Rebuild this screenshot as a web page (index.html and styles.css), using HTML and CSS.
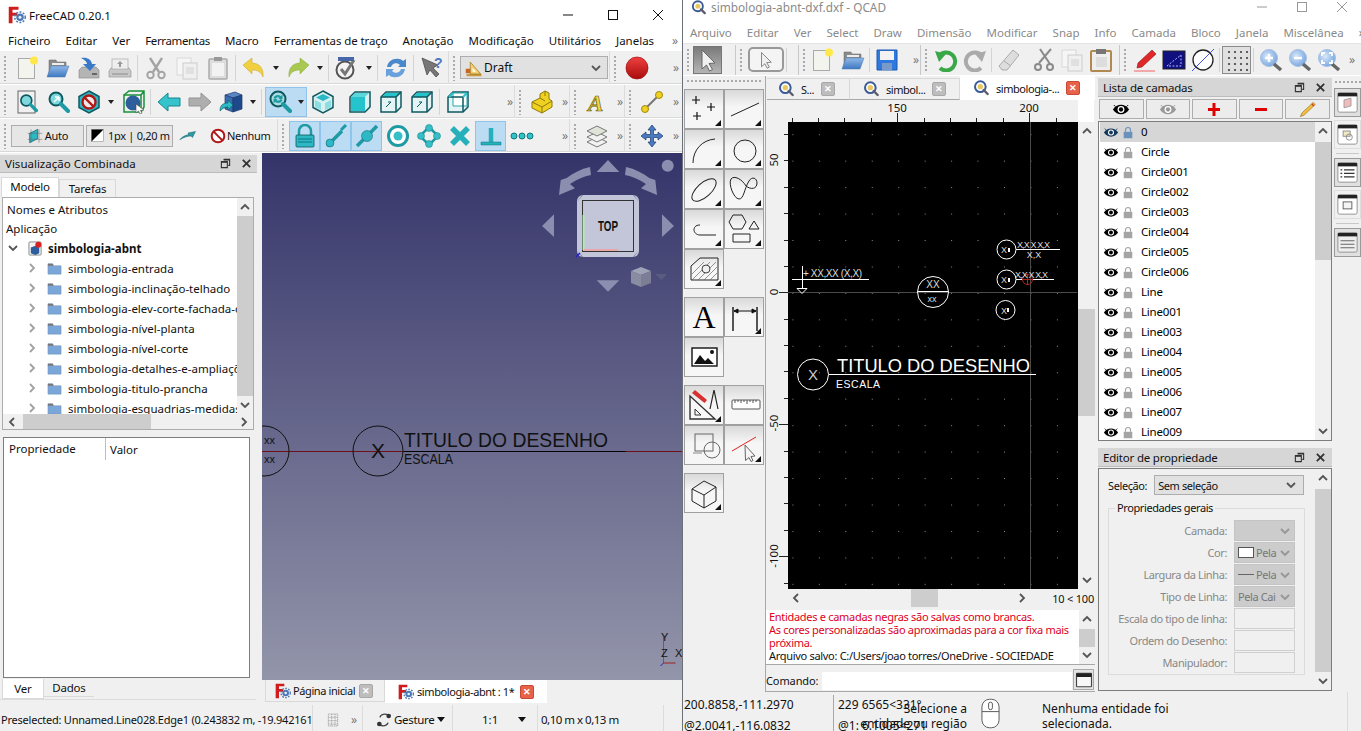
FILE: index.html
```html
<!DOCTYPE html>
<html lang="pt">
<head>
    <meta charset="UTF-8">
    <title>FreeCAD e QCAD</title>
    <link rel="stylesheet" href="styles.css">
</head>
<body>
<svg class="defs" xmlns="http://www.w3.org/2000/svg">
    <defs>
        <linearGradient id="g-red" x1="0" y1="0" x2="0" y2="1"><stop offset="0" stop-color="#f04040"/><stop offset="1" stop-color="#a80c0c"/></linearGradient>
        <linearGradient id="g-blue" x1="0" y1="0" x2="0" y2="1"><stop offset="0" stop-color="#8fb8e8"/><stop offset="1" stop-color="#3f78c0"/></linearGradient>
        <radialGradient id="g-sky" cx=".4" cy=".4" r=".7"><stop offset="0" stop-color="#d8e8fa"/><stop offset="1" stop-color="#6d9fdc"/></radialGradient>
    </defs>
    <symbol id="fc-logo" viewBox="0 0 24 24"><path d="M1 1h13v4H6v4h6v4H6v10H1z" fill="#d01c1c"/><circle cx="16" cy="15" r="5" fill="#4a78b4"/><circle cx="16" cy="15" r="7" fill="none" stroke="#4a78b4" stroke-width="2" stroke-dasharray="2.5 2"/><circle cx="16" cy="15" r="2" fill="#e8f0fa"/></symbol>
    <symbol id="q-logo" viewBox="0 0 24 24"><circle cx="11" cy="10" r="8" fill="#fff" stroke="#3a5a98" stroke-width="3"/><circle cx="11" cy="10" r="4" fill="#e8c860"/><path d="M16 15l6 6" stroke="#5a5a6a" stroke-width="3.5" stroke-linecap="round"/></symbol>
    <symbol id="new" viewBox="0 0 24 24"><rect x="3.5" y="2.5" width="16" height="20" fill="#f4f4ee" stroke="#aaa"/><circle cx="19" cy="4.5" r="4" fill="#ffe94a"/></symbol>
    <symbol id="open" viewBox="0 0 24 24"><path d="M3 20V4h7l1 2h9v5H8z" fill="#8a8a8a" stroke="#666" stroke-width=".5"/><path d="M6 8h12" stroke="#eee" stroke-width="2"/><path d="M1 21l4-11h18l-4 11z" fill="url(#g-blue)" stroke="#4a78b0" stroke-width=".5"/></symbol>
    <symbol id="save" viewBox="0 0 24 24"><path d="M2 14l3-3h14l3 3v8H2z" fill="#b4b4b4" stroke="#888" stroke-width=".6"/><rect x="15" y="17" width="5" height="2" fill="#666"/><path d="M4 2c6-1 10 1 11 6h4l-6 7-7-7h4C10 6 8 4 4 2z" fill="#3a78c8"/></symbol>
    <symbol id="saveas" viewBox="0 0 24 24"><path d="M1 15l2-3h18l2 3v6H1z" fill="#c8c8c8" stroke="#999" stroke-width=".7"/><rect x="4" y="3" width="16" height="10" fill="#eee" stroke="#aaa" stroke-width=".7"/><path d="M12 5l-3 3h2v3h2V8h2z" fill="#999"/><rect x="4" y="17" width="16" height="2" fill="#aaa"/></symbol>
    <symbol id="cut" viewBox="0 0 24 24"><g fill="none" stroke="#a4a4a4"><path d="M6 2l9 14M18 2L9 16" stroke-width="2.4"/><circle cx="6.500" cy="19" r="3.200" stroke-width="2"/><circle cx="17.500" cy="19" r="3.200" stroke-width="2"/></g></symbol>
    <symbol id="copy" viewBox="0 0 24 24"><rect x="2" y="2" width="14" height="17" fill="#f6f6f6" stroke="#d8d8d8"/><rect x="8" y="7" width="14" height="16" fill="#f0f0f0" stroke="#ccc"/><rect x="11" y="11" width="8" height="7" fill="#e0e0e0"/></symbol>
    <symbol id="paste" viewBox="0 0 24 24"><rect x="3" y="3" width="18" height="20" rx="1" fill="#ddd" stroke="#aaa" stroke-width="1.500"/><rect x="6" y="7" width="12" height="13" fill="#f2f2f2"/><rect x="8" y="1" width="8" height="4" fill="#999"/></symbol>
    <symbol id="undo-y" viewBox="0 0 24 24"><path d="M1 9l9-7v5c7 0 12 5 11 14-2-5-5-7-11-7v4z" fill="#f0d040" stroke="#c8a020" stroke-width=".5"/></symbol>
    <symbol id="redo-g" viewBox="0 0 24 24"><path d="M23 9l-9-7v5C7 7 2 12 3 21c2-5 5-7 11-7v4z" fill="#a8c850" stroke="#88a838" stroke-width=".5"/></symbol>
    <symbol id="check" viewBox="0 0 24 24"><circle cx="10" cy="14" r="8.500" fill="#f4f4f4" stroke="#555" stroke-width="2"/><path d="M6 13l4 5 9-14" fill="none" stroke="#777" stroke-width="3"/><rect x="3" y="1" width="16" height="4" fill="#4668a8"/></symbol>
    <symbol id="refresh" viewBox="0 0 24 24"><path d="M3 11C4 5 9 2 15 3c2 0 3 1 4 2l3-2v8h-8l2-2c-3-3-8-2-9 2z" fill="#4a88cc"/><path d="M21 13c-1 6-6 9-12 8-2 0-3-1-4-2l-3 2v-8h8l-2 2c3 3 8 2 9-2z" fill="#6aa0dc"/></symbol>
    <symbol id="draft" viewBox="0 0 24 24"><path d="M2 20h20v3H2z" fill="#c89840"/><path d="M7 4v16h14z" fill="#f0d070" stroke="#a07820"/><path d="M10 12v5h5z" fill="#fff"/><path d="M1 13h6v6H1z" fill="#c86820"/></symbol>
    <symbol id="record" viewBox="0 0 24 24"><circle cx="12" cy="12" r="11" fill="url(#g-red)" stroke="#a01010" stroke-width=".7"/></symbol>
    <symbol id="mag" viewBox="0 0 24 24"><circle cx="10" cy="9" r="6.500" fill="#7fd8dc" stroke="#0e5860" stroke-width="2"/><path d="M15 14l7 7" stroke="#1e9aa4" stroke-width="4" stroke-linecap="round"/></symbol>
    <symbol id="fitall" viewBox="0 0 24 24"><rect x="3" y="1" width="17" height="22" fill="#f0f0f0" stroke="#666"/><use href="#mag" x="3" y="3" width="20" height="20"/></symbol>
    <symbol id="fitsel" viewBox="0 0 24 24"><use href="#mag" width="24" height="24"/><path d="M8 12l5-5M13 7H9M13 7v4" stroke="#fff" stroke-width="1.500" fill="none"/></symbol>
    <symbol id="block" viewBox="0 0 24 24"><path d="M12 1l10 5.500v11L12 23 2 17.500v-11z" fill="#2cb8c4" stroke="#0e5860" stroke-width="1.500"/><circle cx="12" cy="12" r="6.500" fill="#f0e8e8" stroke="#b01818" stroke-width="2.400"/><path d="M7.500 7.500l9 9" stroke="#b01818" stroke-width="2.400"/></symbol>
    <symbol id="boxsel" viewBox="0 0 24 24"><path d="M3 5l5-4h15v16l-3 5M20 5l3-4" fill="none" stroke="#189038" stroke-width="1.500"/><rect x="3" y="5" width="17" height="17" fill="none" stroke="#189038" stroke-width="1.500"/><circle cx="12" cy="13" r="7.500" fill="#2e5f9c"/><path d="M15 14l8 6-3.500.5L21 23l-2 1-1.500-3-2.500 2z" fill="#fff" stroke="#444" stroke-width=".6"/></symbol>
    <symbol id="back" viewBox="0 0 24 24"><path d="M1 12l10-9v5h12v8H11v5z" fill="#35c4cc" stroke="#148890"/></symbol>
    <symbol id="fwd" viewBox="0 0 24 24"><path d="M23 12L13 3v5H1v8h12v5z" fill="#aeaeae" stroke="#939393"/></symbol>
    <symbol id="view3d" viewBox="0 0 24 24"><path d="M6 5l10-3 7 3-9 3z" fill="#5a86c4" stroke="#1c3a70" stroke-width=".7"/><path d="M6 5l8 3v14l-8-3z" fill="#3a6cb0" stroke="#1c3a70" stroke-width=".7"/><path d="M14 8l9-3v14l-9 3z" fill="#1e4a8c" stroke="#1c3a70" stroke-width=".7"/><path d="M1 21c0-6 3-8 8-8V10l5 5-5 5v-3c-3 0-5 1-8 4z" fill="#2cb8c4" stroke="#0e5860" stroke-width=".6"/></symbol>
    <symbol id="sync" viewBox="0 0 24 24"><circle cx="10" cy="9" r="7.500" fill="#a8dce0" stroke="#0e5860" stroke-width="2"/><path d="M15 14l7 7" stroke="#1e9aa4" stroke-width="4" stroke-linecap="round"/><path d="M5.500 8c1-3 5-4 7-2l2-1v4h-4l1-1c-1-1-3-1-4 1zM14.500 10c-1 3-5 4-7 2l-2 1V9h4l-1 1c1 1 3 1 4-1z" fill="#1e9aa4"/></symbol>
    <symbol id="iso" viewBox="0 0 24 24"><path d="M12 1l10 5.500v11L12 23 2 17.500v-11z" fill="#d8f0f0" stroke="#0e5860" stroke-width="1.500"/><path d="M12 4l7 3.500-7 3.500-7-3.500z" fill="#2cb8c4"/><path d="M4 10l6 3v7l-6-3zM20 10l-6 3v7l6-3z" fill="#8adde0"/></symbol>
    <symbol id="cube-f" viewBox="0 0 24 24"><path d="M2 7l5-5h15v15l-5 5H2z" fill="#d8f0f0" stroke="#0e5860" stroke-width="1.500"/><path d="M3 7h14v14H3z" fill="#25c4cc"/><path d="M7 3h14l-4 4H3z" fill="#5cd8dc"/></symbol>
    <symbol id="cube-w" viewBox="0 0 24 24"><path d="M2 7l5-5h15v15l-5 5H2z" fill="#e4f4f4" stroke="#0e5860" stroke-width="1.500"/><path d="M7 3h14l-4 4H3z" fill="#25c4cc"/><path d="M2 7h15v15M17 7l5-5" fill="none" stroke="#0e5860" stroke-width="1.500"/><path d="M7 17l5-5M12 12h-3" stroke="#0e5860" fill="none"/></symbol>
    <symbol id="cube-r" viewBox="0 0 24 24"><path d="M2 7l5-5h15v15l-5 5H2z" fill="#e4f4f4" stroke="#0e5860" stroke-width="1.500"/><path d="M7 3h14v13H7z" fill="#fff" stroke="#25a4ac"/><path d="M2 7h15v15" fill="none" stroke="#0e5860" stroke-width="1.500"/><path d="M7 3l-4 4M21 3l-4 4" stroke="#25c4cc" stroke-width="2"/></symbol>
    <symbol id="shape" viewBox="0 0 24 24"><path d="M2 12l8-4V4l5-3 4 2v6l3 2v6l-10 6-10-5z" fill="#f0d020" stroke="#8a7a10" stroke-width="1"/><path d="M2 12l10 5 10-6M12 17v6M10 8l5 3M15 1v5" fill="none" stroke="#8a7a10"/></symbol>
    <symbol id="ln-y" viewBox="0 0 24 24"><path d="M5 19L19 5" stroke="#777" stroke-width="2"/><circle cx="19" cy="5" r="3.500" fill="#f0d020" stroke="#a08a10"/><circle cx="5" cy="19" r="3.500" fill="#f0d020" stroke="#a08a10"/></symbol>
    <symbol id="auto" viewBox="0 0 24 24"><path d="M4 8l12-6v14L4 22z" fill="#2cb8c4" stroke="#0e5860"/><path d="M1 8h22M1 17h22M6 2v20M18 2v20" stroke="#666" fill="none" stroke-width=".8"/></symbol>
    <symbol id="swatch" viewBox="0 0 24 24"><rect x="1" y="1" width="22" height="22" fill="#fff" stroke="#888"/><path d="M1 1h22L1 23z" fill="#000"/></symbol>
    <symbol id="arrow-t" viewBox="0 0 24 24"><path d="M1 17c3-4 7-6 12-7l-1-2 10-2-4 8-2-2c-5 0-10 2-15 5z" fill="#2a9aa4" stroke="#0e5860" stroke-width=".6"/></symbol>
    <symbol id="none" viewBox="0 0 24 24"><circle cx="12" cy="12" r="9.500" fill="#fff" stroke="#b01818" stroke-width="3"/><path d="M5.500 5.500l13 13" stroke="#b01818" stroke-width="3"/></symbol>
    <symbol id="lock-t" viewBox="0 0 24 24"><path d="M6 12V7a6 6 0 0 1 12 0v5" fill="none" stroke="#1e9aa4" stroke-width="2.500"/><rect x="3" y="11" width="18" height="12" rx="1" fill="#2cb8c4" stroke="#0e5860" stroke-width=".8"/><path d="M5 15h14M5 18h14" stroke="#0e7880"/></symbol>
    <symbol id="sn-end" viewBox="0 0 24 24"><path d="M3 22L18 7" stroke="#1e9aa4" stroke-width="3.500"/><circle cx="6" cy="19" r="4" fill="#2cb8c4" stroke="#0e5860" stroke-width=".5"/><path d="M22 1l-5 5" stroke="#1e9aa4" stroke-width="3"/></symbol>
    <symbol id="sn-mid" viewBox="0 0 24 24"><path d="M2 22L22 2" stroke="#1e9aa4" stroke-width="3.500"/><circle cx="12" cy="12" r="5.500" fill="#2cb8c4" stroke="#0e5860" stroke-width=".5"/></symbol>
    <symbol id="sn-cen" viewBox="0 0 24 24"><circle cx="12" cy="12" r="9.500" fill="#fff" stroke="#1e9aa4" stroke-width="3"/><circle cx="12" cy="12" r="4.500" fill="#35c0c8"/></symbol>
    <symbol id="sn-ang" viewBox="0 0 24 24"><path d="M12 3L21 12 12 21 3 12z" fill="none" stroke="#1e9aa4" stroke-width="2.500"/><g fill="#35c0c8" stroke="#0e7880" stroke-width=".5"><circle cx="12" cy="4" r="3.500"/><circle cx="20" cy="12" r="3.500"/><circle cx="12" cy="20" r="3.500"/><circle cx="4" cy="12" r="3.500"/></g></symbol>
    <symbol id="sn-x" viewBox="0 0 24 24"><path d="M4 4l16 16M20 4L4 20" stroke="#25b0ba" stroke-width="5.500"/></symbol>
    <symbol id="sn-per" viewBox="0 0 24 24"><path d="M12 4v14" stroke="#25b0ba" stroke-width="4.500"/><path d="M2 18h20v3H2z" fill="#25b0ba" stroke="#0e7880" stroke-width=".5"/></symbol>
    <symbol id="sn-dots" viewBox="0 0 24 24"><g fill="#35c0c8" stroke="#0e7880"><circle cx="4" cy="12" r="3"/><circle cx="12" cy="12" r="3"/><circle cx="20" cy="12" r="3"/></g></symbol>
    <symbol id="layers" viewBox="0 0 24 24"><g fill="#f2f2f2" stroke="#777"><path d="M12 13l10 5-10 5-10-5z"/><path d="M12 8l10 5-10 5-10-5z"/><path d="M12 2l10 5-10 5-10-5z" fill="#e0e4d8"/></g></symbol>
    <symbol id="move" viewBox="0 0 24 24"><path d="M12 1l4 5h-2.500v4.500H18V8l5 4-5 4v-2.500h-4.500V18H16l-4 5-4-5h2.500v-4.500H6V16l-5-4 5-4v2.500h4.500V6H8z" fill="#4a7ac0" stroke="#1c3a70" stroke-width=".7"/></symbol>
    <symbol id="restore" viewBox="0 0 12 12"><path d="M4 1.500h6.500V8H9M1.500 4H8v6.500H1.500z" fill="none" stroke="#333" stroke-width="1.200"/><path d="M1.500 4.500H8M4 2h6.500" stroke="#333" stroke-width="1.500"/></symbol>
    <symbol id="close-x" viewBox="0 0 12 12"><path d="M2 2l8 8M10 2l-8 8" stroke="#333" stroke-width="2"/></symbol>
    <symbol id="chev-u" viewBox="0 0 12 12"><path d="M2 8l4-4 4 4" fill="none" stroke="#555" stroke-width="1.800"/></symbol>
    <symbol id="chev-d" viewBox="0 0 12 12"><path d="M2 4l4 4 4-4" fill="none" stroke="#555" stroke-width="1.800"/></symbol>
    <symbol id="chev-l" viewBox="0 0 12 12"><path d="M8 2L4 6l4 4" fill="none" stroke="#555" stroke-width="1.800"/></symbol>
    <symbol id="chev-r" viewBox="0 0 12 12"><path d="M4 2l4 4-4 4" fill="none" stroke="#555" stroke-width="1.800"/></symbol>
    <symbol id="doc" viewBox="0 0 16 16"><rect x="1" y="1" width="13" height="14" rx="1" fill="#f4f4f4" stroke="#888"/><path d="M3 7l5-2 4 2v6l-4 2-5-2z" fill="#2c5e9e"/><circle cx="11" cy="4" r="3.200" fill="#d82020"/></symbol>
    <symbol id="folder" viewBox="0 0 16 16"><path d="M1 14V3h5l1 2h8v9z" fill="#7ba6d8" stroke="#6f8fb8" stroke-width=".5"/><path d="M1 3h5l1 2H1z" fill="#777"/></symbol>
    <symbol id="mesh" viewBox="0 0 24 24"><path d="M5 3h14v18H5zM5 8h14M5 13h14M5 18h14M10 3v18M15 3v18" fill="none" stroke="#aaa" stroke-width="1.500" stroke-dasharray="2 1"/></symbol>
    <symbol id="gesture" viewBox="0 0 24 24"><path d="M6 8c1-5 8-6 13-3" fill="none" stroke="#444" stroke-width="2"/><path d="M18 16c-1 5-8 6-13 3" fill="none" stroke="#444" stroke-width="2"/><circle cx="19" cy="6" r="3.500" fill="#333"/><circle cx="5" cy="18" r="3.500" fill="#333"/></symbol>
    <symbol id="arrow-s" viewBox="0 0 24 24"><path d="M6 2l13 13-6 .5 3.500 6-3 1.500-3-6-4.500 4z" fill="#f0f0f0" stroke="#666"/></symbol>
    <symbol id="floppy" viewBox="0 0 24 24"><path d="M2 2h20v20H2z" fill="#2e78e0" stroke="#1e58b0"/><rect x="5" y="3" width="14" height="9" fill="#f2f2f2"/><rect x="7" y="15" width="10" height="7" fill="#7a9ac8"/></symbol>
    <symbol id="undo-q" viewBox="0 0 24 24"><path d="M5 8a9 9 0 1 1 1 12" fill="none" stroke="#3aa848" stroke-width="4"/><path d="M1 3l11 3-7 8z" fill="#3aa848"/></symbol>
    <symbol id="redo-q" viewBox="0 0 24 24"><path d="M19 8a9 9 0 1 0-1 12" fill="none" stroke="#aaa" stroke-width="4"/><path d="M23 3L12 6l7 8z" fill="#aaa"/></symbol>
    <symbol id="eraser" viewBox="0 0 24 24"><path d="M16 2l6 5-12 15H5l-3-4z" fill="#ddd" stroke="#aaa"/><path d="M7 13l7 5" stroke="#aaa"/></symbol>
    <symbol id="cut-q" viewBox="0 0 24 24"><g fill="none" stroke="#8a8a8a"><path d="M20 1L8 15M9 1l10 15" stroke-width="2"/><circle cx="7" cy="19" r="3" stroke-width="2"/><circle cx="19" cy="19" r="3" stroke-width="2"/></g></symbol>
    <symbol id="paste-q" viewBox="0 0 24 24"><rect x="2" y="3" width="20" height="20" rx="1" fill="#eee" stroke="#b08850" stroke-width="2"/><rect x="7" y="1" width="10" height="5" fill="#777"/><rect x="7" y="9" width="11" height="10" fill="#ddd"/></symbol>
    <symbol id="pencil-r" viewBox="0 0 24 24"><path d="M19 2l4 4L9 19l-5 1 1-5z" fill="#e02828" stroke="#901010" stroke-width=".6"/><path d="M1 23h21" stroke="#f09090" stroke-width="1.500"/></symbol>
    <symbol id="gridblue" viewBox="0 0 24 24"><rect x="1" y="3" width="22" height="18" fill="#101080" stroke="#222"/><path d="M5 18L19 7M19 7v11H5" fill="none" stroke="#b0b8ff" stroke-dasharray="2 1.500"/></symbol>
    <symbol id="circ-ln" viewBox="0 0 24 24"><circle cx="12" cy="12" r="10" fill="#fff" stroke="#222" stroke-width="1.300"/><path d="M1 23L23 1" stroke="#4050e0"/></symbol>
    <symbol id="griddots" viewBox="0 0 24 24"><g fill="#333"><circle cx="4" cy="4" r="1"/><circle cx="10" cy="4" r="1"/><circle cx="16" cy="4" r="1"/><circle cx="22" cy="4" r="1"/><circle cx="4" cy="10" r="1"/><circle cx="10" cy="10" r="1"/><circle cx="16" cy="10" r="1"/><circle cx="22" cy="10" r="1"/><circle cx="4" cy="16" r="1"/><circle cx="10" cy="16" r="1"/><circle cx="16" cy="16" r="1"/><circle cx="22" cy="16" r="1"/><circle cx="4" cy="22" r="1"/><circle cx="10" cy="22" r="1"/><circle cx="16" cy="22" r="1"/><circle cx="22" cy="22" r="1"/></g></symbol>
    <symbol id="zoom-p" viewBox="0 0 24 24"><circle cx="10" cy="10" r="8.500" fill="url(#g-sky)" stroke="#a8c0e0"/><path d="M15 16l7 6" stroke="#666" stroke-width="3.500"/><path d="M6 10h8M10 6v8" stroke="#fff" stroke-width="2.400"/></symbol>
    <symbol id="zoom-m" viewBox="0 0 24 24"><circle cx="10" cy="10" r="8.500" fill="url(#g-sky)" stroke="#a8c0e0"/><path d="M15 16l7 6" stroke="#666" stroke-width="3.500"/><path d="M6 10h8" stroke="#fff" stroke-width="2.400"/></symbol>
    <symbol id="zoom-f" viewBox="0 0 24 24"><circle cx="10" cy="10" r="8.500" fill="url(#g-sky)" stroke="#a8c0e0"/><path d="M15 16l7 6" stroke="#666" stroke-width="3.500"/><path d="M5 8V5h3M12 5h3v3M15 12v3h-3M8 15H5v-3" fill="none" stroke="#fff" stroke-width="1.800"/></symbol>
    <symbol id="eye" viewBox="0 0 20 14"><path d="M1 7c4-7 14-7 18 0-4 7-14 7-18 0z" fill="currentColor"/><circle cx="10" cy="7" r="3.800" fill="#fff"/><circle cx="10" cy="7" r="2.400" fill="currentColor"/><path d="M2 2l2 2M18 2l-2 2" stroke="currentColor"/></symbol>
    <symbol id="lock" viewBox="0 0 14 18"><path d="M3.500 8V5.500a3.500 3.500 0 0 1 7 0V8" fill="none" stroke="currentColor" stroke-width="1.600"/><rect x="1" y="8" width="12" height="9" fill="currentColor"/></symbol>
    <symbol id="pencil-y" viewBox="0 0 24 24"><path d="M20 2l3 3L7 20l-5 2 2-5z" fill="#f0c040" stroke="#906010" stroke-width=".8"/><path d="M18 4l3 3" stroke="#d04020" stroke-width="2"/></symbol>
    <symbol id="dk1" viewBox="0 0 24 24"><rect x="1" y="1" width="22" height="22" rx="2" fill="#fff" stroke="#888"/><rect x="1" y="1" width="22" height="4" fill="#222"/><path d="M8 9l8-2v9l-8 2z" fill="#eebcbc" stroke="#999"/></symbol>
    <symbol id="dk2" viewBox="0 0 24 24"><rect x="1" y="1" width="22" height="22" rx="2" fill="#fff" stroke="#888"/><rect x="1" y="1" width="22" height="4" fill="#222"/><rect x="7" y="8" width="8" height="6" fill="#f0e8c0" stroke="#888"/><circle cx="14" cy="15" r="3.500" fill="none" stroke="#888"/></symbol>
    <symbol id="dk3" viewBox="0 0 24 24"><rect x="1" y="1" width="22" height="22" rx="2" fill="#fff" stroke="#888"/><rect x="1" y="1" width="22" height="4" fill="#222"/><path d="M4 9h2M8 9h12M4 13h2M8 13h12M4 17h2M8 17h12" stroke="#333" stroke-width="1.500"/></symbol>
    <symbol id="dk4" viewBox="0 0 24 24"><rect x="1" y="1" width="22" height="22" rx="2" fill="#fff" stroke="#888"/><rect x="1" y="1" width="22" height="4" fill="#222"/><rect x="7" y="9" width="10" height="8" fill="#f4f4f4" stroke="#555"/></symbol>
    <symbol id="dk5" viewBox="0 0 24 24"><rect x="1" y="1" width="22" height="22" rx="2" fill="#eee" stroke="#888"/><rect x="1" y="1" width="22" height="4" fill="#222"/><path d="M4 10h16M4 14h16M4 18h16" stroke="#555"/></symbol>
    <symbol id="win" viewBox="0 0 24 24"><rect x="2" y="3" width="20" height="18" rx="1" fill="#f8f8f8" stroke="#444" stroke-width="1.500"/><rect x="2" y="3" width="20" height="5" fill="#222"/></symbol>
    <symbol id="t-pts" viewBox="0 0 34 34"><path d="M9 4v8M5 8h8M24 11v8M20 15h8M10 20v8M6 24h8" stroke="#111" stroke-width="1.200"/></symbol>
    <symbol id="t-line" viewBox="0 0 34 34"><path d="M4 24L32 11" stroke="#222"/></symbol>
    <symbol id="t-arc" viewBox="0 0 34 34"><path d="M6 31C6 18 15 8 28 7" fill="none" stroke="#222"/></symbol>
    <symbol id="t-circ" viewBox="0 0 34 34"><circle cx="18" cy="19" r="11" fill="none" stroke="#222"/></symbol>
    <symbol id="t-ell" viewBox="0 0 34 34"><ellipse cx="17" cy="18" rx="15" ry="7" transform="rotate(-42 17 18)" fill="none" stroke="#222"/></symbol>
    <symbol id="t-spl" viewBox="0 0 34 34"><path d="M19 14C15 7 7 3 4 7 1 12 7 27 12 27 17 27 17 17 22 9 25 4 30 6 30 11 30 17 24 18 19 14z" fill="none" stroke="#222"/></symbol>
    <symbol id="t-poly" viewBox="0 0 34 34"><path d="M2 10l4-7h9l4 7-4 7H6zM27 9l5 8H22zM6 22h17v8H6z" fill="none" stroke="#222"/></symbol>
    <symbol id="t-lead" viewBox="0 0 34 34"><path d="M13 13c-5 0-6 3-6 5s2 5 6 5h16" fill="none" stroke="#222"/></symbol>
    <symbol id="t-hatch" viewBox="0 0 34 34"><path d="M4 28V14l9-8h18v22z" fill="none" stroke="#222"/><path d="M5 22l12-12M5 28l18-18M11 28l18-18M17 28l13-13M23 28l7-7" stroke="#666" stroke-width=".7"/><circle cx="19" cy="17" r="4" fill="#f0f0f0" stroke="#444"/></symbol>
    <symbol id="t-dim" viewBox="0 0 34 34"><path d="M6 7v24M30 7v24" stroke="#111" stroke-width="1.400"/><path d="M7 11h22M7 11l4-2v4zM29 11l-4-2v4z" stroke="#111" fill="#111"/></symbol>
    <symbol id="t-img" viewBox="0 0 34 34"><rect x="5" y="8" width="25" height="18" fill="#fff" stroke="#111" stroke-width="1.400"/><path d="M7 24l6-9 5 6 3-3 6 6z" fill="#111"/><circle cx="25" cy="12" r="2" fill="#111"/></symbol>
    <symbol id="t-draft" viewBox="0 0 34 34"><path d="M3 8v23h25z" fill="#f8f8f8" stroke="#333" stroke-width="1.400"/><path d="M8 21v6h6z" fill="none" stroke="#333"/><path d="M8 2l12 10-2.500 3L5 5z" fill="#d83030"/><path d="M27 2l-4 19M27 2l4 19" stroke="#222" stroke-width="1.200"/></symbol>
    <symbol id="t-ruler" viewBox="0 0 34 34"><rect x="5" y="12" width="28" height="9" rx="1" fill="#fff" stroke="#555"/><path d="M8 12v3M11 12v2M14 12v3M17 12v2M20 12v4M23 12v2M26 12v3M29 12v2" stroke="#555"/></symbol>
    <symbol id="t-over" viewBox="0 0 34 34"><rect x="8" y="6" width="18" height="17" fill="none" stroke="#666"/><circle cx="25" cy="22" r="8" fill="none" stroke="#666"/><path d="M6 25h9" stroke="#888"/></symbol>
    <symbol id="t-sel" viewBox="0 0 34 34"><path d="M5 23L29 9" stroke="#e02020"/><path d="M18 17l10 11-4 .5 2 4-2 1-2-4-3.500 3z" fill="#f4f4f4" stroke="#666"/></symbol>
    <symbol id="t-cube" viewBox="0 0 34 34"><path d="M17 5l12 6v14l-12 7-12-7V13zM5 13l12 6 12-8M17 19v13" fill="none" stroke="#222"/></symbol>
    <symbol id="mouse" viewBox="0 0 20 32"><rect x="1" y="1" width="18" height="30" rx="8" fill="#fff" stroke="#555"/><path d="M1 14h18" stroke="#555"/><rect x="8" y="4" width="4" height="8" rx="2" fill="#fff" stroke="#555"/></symbol>
</svg>

<div class="desktop">
    <div class="freecad">
        <div class="titlebar fc-title">
            <svg class="logo"><use href="#fc-logo"/></svg>
            <span>FreeCAD 0.20.1</span>
            <div class="winbtns">
                <svg class="wb"><path d="M0 7h10" stroke="#111"/></svg>
                <svg class="wb"><rect x=".5" y="2.500" width="9" height="9" fill="none" stroke="#111"/></svg>
                <svg class="wb"><path d="M0 2l10 10M10 2L0 12" stroke="#111"/></svg>
            </div>
        </div>
        <div class="menubar fc-menu">
            <span>Ficheiro</span><span>Editar</span><span>Ver</span><span class="tight">Ferramentas</span><span>Macro</span><span class="tight2">Ferramentas de traço</span><span>Anotação</span><span>Modificação</span><span>Utilitários</span><span>Janelas</span>
            <em class="more menu-more">»</em>
        </div>

        <div class="tbrow">
            <div class="bar bar-449">
                <i class="grip"></i>
                <b class="btn"><svg class="ic"><use href="#new"/></svg></b>
                <b class="btn"><svg class="ic"><use href="#open"/></svg></b>
                <b class="btn"><svg class="ic"><use href="#save"/></svg></b>
                <b class="btn"><svg class="ic"><use href="#saveas"/></svg></b>
                <i class="sep"></i>
                <b class="btn"><svg class="ic"><use href="#cut"/></svg></b>
                <b class="btn"><svg class="ic"><use href="#copy"/></svg></b>
                <b class="btn"><svg class="ic"><use href="#paste"/></svg></b>
                <i class="sep"></i>
                <b class="btn"><svg class="ic"><use href="#undo-y"/></svg></b><i class="dd"></i>
                <b class="btn"><svg class="ic"><use href="#redo-g"/></svg></b><i class="dd"></i>
                <i class="sep"></i>
                <b class="btn"><svg class="ic"><use href="#check"/></svg></b><i class="dd"></i>
                <i class="sep"></i>
                <b class="btn"><svg class="ic"><use href="#refresh"/></svg></b>
                <i class="sep"></i>
                <b class="btn"><svg class="ic" viewBox="0 0 24 24"><path d="M2 2l5 17 3-5 6 7 3-3-6-6 5-3z" fill="#777" stroke="#444" stroke-width=".7"/><text x="14" y="12" class="help-q">?</text></svg></b>
            </div>
            <div class="bar bar-161">
                <i class="grip"></i>
                <div class="combo draft-combo"><svg class="ic-s"><use href="#draft"/></svg><span>Draft</span><svg class="chev"><use href="#chev-d"/></svg></div>
            </div>
            <div class="bar bar-last">
                <i class="grip"></i>
                <b class="btn"><svg class="ic"><use href="#record"/></svg></b>
                <em class="more">»</em>
            </div>
        </div>

        <div class="tbrow">
            <div class="bar bar-515">
                <i class="grip"></i>
                <b class="btn"><svg class="ic"><use href="#fitall"/></svg></b>
                <b class="btn"><svg class="ic"><use href="#fitsel"/></svg></b>
                <b class="btn"><svg class="ic"><use href="#block"/></svg></b><i class="dd"></i>
                <b class="btn"><svg class="ic"><use href="#boxsel"/></svg></b>
                <i class="sep"></i>
                <b class="btn"><svg class="ic"><use href="#back"/></svg></b>
                <b class="btn"><svg class="ic"><use href="#fwd"/></svg></b>
                <b class="btn"><svg class="ic"><use href="#view3d"/></svg></b><i class="dd"></i>
                <i class="sep"></i>
                <div class="on-group"><b class="btn btn-29"><svg class="ic"><use href="#sync"/></svg></b><i class="dd"></i></div>
                <b class="btn"><svg class="ic"><use href="#iso"/></svg></b>
                <b class="btn btn-gap"><svg class="ic"><use href="#cube-f"/></svg></b>
                <b class="btn"><svg class="ic"><use href="#cube-w"/></svg></b>
                <b class="btn"><svg class="ic"><use href="#cube-w"/></svg></b>
                <i class="sep"></i>
                <b class="btn"><svg class="ic"><use href="#cube-r"/></svg></b>
                <em class="more">»</em>
            </div>
            <div class="bar bar-55">
                <i class="grip"></i>
                <b class="btn"><svg class="ic"><use href="#shape"/></svg></b>
                <em class="more">»</em>
            </div>
            <div class="bar bar-55">
                <i class="grip"></i>
                <b class="btn"><svg class="ic" viewBox="0 0 24 24"><text x="3" y="21" class="icon-a">A</text></svg></b>
                <em class="more">»</em>
            </div>
            <div class="bar bar-last">
                <i class="grip"></i>
                <b class="btn"><svg class="ic"><use href="#ln-y"/></svg></b>
                <em class="more">»</em>
            </div>
        </div>

        <div class="tbrow">
            <div class="bar bar-278">
                <i class="grip"></i>
                <div class="tb-text auto-btn"><svg class="ic-n"><use href="#auto"/></svg><span>Auto</span></div>
                <div class="tb-text width-btn"><svg class="ic-w"><use href="#swatch"/></svg><span>1px | 0,20 m</span></div>
                <b class="btn btn-29"><svg class="ic-s"><use href="#arrow-t"/></svg></b>
                <div class="tb-plain"><svg class="ic-n"><use href="#none"/></svg><span>Nenhum</span></div>
            </div>
            <div class="bar bar-292">
                <i class="grip"></i>
                <b class="btn on"><svg class="ic"><use href="#lock-t"/></svg></b>
                <b class="btn on"><svg class="ic"><use href="#sn-end"/></svg></b>
                <b class="btn on"><svg class="ic"><use href="#sn-mid"/></svg></b>
                <b class="btn"><svg class="ic"><use href="#sn-cen"/></svg></b>
                <b class="btn"><svg class="ic"><use href="#sn-ang"/></svg></b>
                <b class="btn"><svg class="ic"><use href="#sn-x"/></svg></b>
                <b class="btn on"><svg class="ic"><use href="#sn-per"/></svg></b>
                <b class="btn"><svg class="ic"><use href="#sn-dots"/></svg></b>
                <em class="more">»</em>
            </div>
            <div class="bar bar-55">
                <i class="grip"></i>
                <b class="btn"><svg class="ic"><use href="#layers"/></svg></b>
                <em class="more">»</em>
            </div>
            <div class="bar bar-last">
                <i class="grip"></i>
                <b class="btn"><svg class="ic"><use href="#move"/></svg></b>
                <em class="more">»</em>
            </div>
        </div>

        <div class="fc-main">
            <div class="combo-view">
                <div class="dock-title"><span>Visualização Combinada</span><svg class="dk-i"><use href="#restore"/></svg><svg class="dk-i"><use href="#close-x"/></svg></div>
                <div class="tabs-top">
                    <span class="tab tab-active tab-modelo">Modelo</span>
                    <span class="tab tab-tarefas">Tarefas</span>
                </div>
                <div class="tree-box">
                    <div class="tree-body">
                        <div class="tree">
                            <div class="t-row t-head">Nomes e Atributos</div>
                            <div class="t-row t-app">Aplicação</div>
                            <div class="t-row t-doc"><svg class="tw"><use href="#chev-d"/></svg><svg class="fold"><use href="#doc"/></svg><strong>simbologia-abnt</strong></div>
                            <div class="t-row t-item"><svg class="tw tw-g"><use href="#chev-r"/></svg><svg class="fold"><use href="#folder"/></svg><span>simbologia-entrada</span></div>
                            <div class="t-row t-item"><svg class="tw tw-g"><use href="#chev-r"/></svg><svg class="fold"><use href="#folder"/></svg><span>simbologia-inclinação-telhado</span></div>
                            <div class="t-row t-item"><svg class="tw tw-g"><use href="#chev-r"/></svg><svg class="fold"><use href="#folder"/></svg><span>simbologia-elev-corte-fachada-detalhe</span></div>
                            <div class="t-row t-item"><svg class="tw tw-g"><use href="#chev-r"/></svg><svg class="fold"><use href="#folder"/></svg><span>simbologia-nível-planta</span></div>
                            <div class="t-row t-item"><svg class="tw tw-g"><use href="#chev-r"/></svg><svg class="fold"><use href="#folder"/></svg><span>simbologia-nível-corte</span></div>
                            <div class="t-row t-item"><svg class="tw tw-g"><use href="#chev-r"/></svg><svg class="fold"><use href="#folder"/></svg><span>simbologia-detalhes-e-ampliações</span></div>
                            <div class="t-row t-item"><svg class="tw tw-g"><use href="#chev-r"/></svg><svg class="fold"><use href="#folder"/></svg><span>simbologia-titulo-prancha</span></div>
                            <div class="t-row t-item"><svg class="tw tw-g"><use href="#chev-r"/></svg><svg class="fold"><use href="#folder"/></svg><span>simbologia-esquadrias-medidas</span></div>
                        </div>
                        <div class="vs vs-tree"><svg class="ch"><use href="#chev-u"/></svg><div class="thumb"></div><svg class="ch"><use href="#chev-d"/></svg></div>
                    </div>
                    <div class="hs hs-tree"><svg class="ch"><use href="#chev-l"/></svg><div class="hthumb hthumb-tree"></div><svg class="ch ch-end"><use href="#chev-r"/></svg></div>
                </div>
                <div class="prop-box">
                    <div class="prop-head"><span class="ph-a">Propriedade</span><span class="ph-b">Valor</span></div>
                </div>
                <div class="tabs-bottom">
                    <span class="tab tab-active tab-ver">Ver</span>
                    <span class="tab tab-dados">Dados</span>
                </div>
            </div>
            <div class="view-col">
                <div class="view3d">
                    <svg class="canvas-svg" xmlns="http://www.w3.org/2000/svg">
                        <g transform="translate(-262 -153)">
                            <path d="M262 451.500H404" stroke="#6e1018"/>
                            <path d="M404 451.500H626" stroke="#000"/>
                            <path d="M626 451.500H682" stroke="#6e1018"/>
                            <circle cx="264" cy="451" r="25" fill="none" stroke="#111"/>
                            <circle cx="378" cy="451" r="25" fill="none" stroke="#111"/>
                            <text x="378" y="458" text-anchor="middle" class="t3d t-x">X</text>
                            <text x="264" y="444" class="t3d t-xx" text-anchor="start">xx</text>
                            <text x="264" y="463" class="t3d t-xx" text-anchor="start">xx</text>
                            <text x="404" y="447" class="t3d t-title" textLength="204" lengthAdjust="spacingAndGlyphs">TITULO DO DESENHO</text>
                            <text x="404" y="464" class="t3d t-esc" textLength="49" lengthAdjust="spacingAndGlyphs">ESCALA</text>

                            <g fill="#8b8eae">
                                <path d="M596.700 172L608 160l11.300 12zM596.700 280.300h22.600L608 291.700zM542 226l12-11.700v22.700zM662 214.300L674 226l-12 11z"/>
                                <path d="M590 167C581 169 573 173 566.700 178L560.700 180 559 195 575 188.300 570 184C577 179 584 176.500 591 175z"/>
                                <path d="M626 167C635 169 643 173 649.300 178L655.300 180 657 195 641 188.300 646 184C639 179 632 176.500 625 175z"/>
                                <circle cx="667.700" cy="165.700" r="6"/>
                            </g>
                            <path d="M631 271l10-4 10 4-10 4z" fill="#a0a2b8"/>
                            <path d="M631 271l10 4v12l-10-4z" fill="#8a8ca2"/>
                            <path d="M651 271l-10 4v12l10-4z" fill="#7c7e96"/>
                            <path d="M655 274h12.300l-6 6z" fill="#5a5b80"/>
                            <rect x="577" y="195" width="62" height="62" rx="6" fill="#c2c6d8"/>
                            <path d="M577 202l6-7h-1zM639 202l-6-7h1zM577 250l6 7h-1zM639 250l-6 7h1z" fill="#777a90"/>
                            <rect x="582.500" y="200.500" width="51" height="51" fill="none" stroke="#333"/>
                            <path d="M583.500 215v35" stroke="#b4e8b4" stroke-width="2"/>
                            <path d="M584 250h34" stroke="#e8a8a8" stroke-width="2"/>
                            <path d="M576 257l4-4" stroke="#2020e0" stroke-width="1.500"/>
                            <text x="608" y="231" text-anchor="middle" class="t-top" textLength="20" lengthAdjust="spacingAndGlyphs">TOP</text>

                            <path d="M663.500 637v26" fill="none" stroke="#2a8a2a"/>
                            <path d="M663.500 663h12" stroke="#a02020"/>
                            <path d="M663.500 663l-3 3" stroke="#2020c0"/>
                            <text x="661" y="641" class="t-ax">Y</text>
                            <text x="661" y="657" class="t-ax">Z</text>
                            <text x="675" y="657" class="t-ax">X</text>
                        </g>
                    </svg>
                </div>
                <div class="view-tabs">
                    <div class="vtab vtab-home"><svg class="ic-v"><use href="#fc-logo"/></svg><span>Página inicial</span><i class="tab-x tab-x-off">✕</i></div>
                    <div class="vtab vtab-on"><svg class="ic-v"><use href="#fc-logo"/></svg><span>simbologia-abnt : 1*</span><i class="tab-x">✕</i></div>
                </div>
            </div>
        </div>

        <div class="fc-status">
            <div class="st-msg">Preselected: Unnamed.Line028.Edge1 (0.243832 m, -19.942161 m, 0.000000 m)</div>
            <div class="st-cell st-mesh"><svg class="ic-n"><use href="#mesh"/></svg><em class="more">»</em></div>
            <div class="st-cell st-gest"><svg class="ic-n"><use href="#gesture"/></svg><span>Gesture</span><i class="tri"></i></div>
            <div class="st-cell st-scale"><span>1:1</span><i class="tri"></i></div>
            <div class="st-cell st-dim"><span>0,10 m x 0,13 m</span></div>
            <div class="st-end"></div>
        </div>
    </div>

    <div class="qcad">
        <div class="titlebar q-title">
            <svg class="logo-q"><use href="#q-logo"/></svg>
            <span>simbologia-abnt-dxf.dxf - QCAD</span>
            <div class="winbtns winbtns-q">
                <svg class="wb"><path d="M0 7h10" stroke="#999"/></svg>
                <svg class="wb"><rect x=".5" y="2.500" width="9" height="9" fill="none" stroke="#999"/></svg>
                <svg class="wb"><path d="M0 2l10 10M10 2L0 12" stroke="#999"/></svg>
            </div>
        </div>
        <div class="menubar q-menu">
            <span>Arquivo</span><span>Editar</span><span>Ver</span><span>Select</span><span>Draw</span><span>Dimensão</span><span>Modificar</span><span>Snap</span><span>Info</span><span>Camada</span><span>Bloco</span><span>Janela</span><span>Miscelânea</span>
            <em class="more menu-more">»</em>
        </div>
        <div class="q-tools">
            <i class="grip grip-q"></i>
            <b class="qb qb-pressed"><svg class="ic"><use href="#arrow-s"/></svg></b>
            <i class="vline vl-735"></i><i class="grip grip-q"></i>
            <b class="qb-round"><svg class="ic-s"><use href="#arrow-s"/></svg></b>
            <i class="thin"></i>
            <i class="vline vl-799"></i><i class="grip grip-q"></i>
            <b class="qb"><svg class="ic"><use href="#new"/></svg></b>
            <b class="qb qb-open"><svg class="ic"><use href="#open"/></svg></b>
            <i class="thin"></i>
            <b class="qb"><svg class="ic"><use href="#floppy"/></svg></b>
            <em class="more q-more">»</em>
            <i class="vline vl-921"></i><i class="grip grip-q"></i>
            <b class="qb qb-undo"><svg class="ic"><use href="#undo-q"/></svg></b>
            <b class="qb"><svg class="ic"><use href="#redo-q"/></svg></b>
            <i class="thin"></i>
            <b class="qb"><svg class="ic"><use href="#eraser"/></svg></b>
            <b class="qb qb-cut"><svg class="ic"><use href="#cut-q"/></svg></b>
            <b class="qb"><svg class="ic"><use href="#copy"/></svg></b>
            <b class="qb"><svg class="ic"><use href="#paste-q"/></svg></b>
            <i class="vline vl-1121"></i><i class="grip grip-q"></i>
            <b class="qb qb-pen"><svg class="ic"><use href="#pencil-r"/></svg></b>
            <b class="qb"><svg class="ic"><use href="#gridblue"/></svg></b>
            <b class="qb"><svg class="ic"><use href="#circ-ln"/></svg></b>
            <i class="thin"></i>
            <b class="qb qb-grid"><svg class="ic"><use href="#griddots"/></svg></b>
            <i class="thin"></i>
            <b class="qb"><svg class="ic"><use href="#zoom-p"/></svg></b>
            <b class="qb"><svg class="ic"><use href="#zoom-m"/></svg></b>
            <b class="qb"><svg class="ic"><use href="#zoom-f"/></svg></b>
            <em class="more q-more2">»</em>
        </div>

        <div class="q-main">
            <div class="q-side">
                <div class="hgrip"></div>
                <div class="tool-grid">
                    <b class="tool corner"><svg><use href="#t-pts"/></svg></b><b class="tool corner"><svg><use href="#t-line"/></svg></b>
                    <b class="tool corner"><svg><use href="#t-arc"/></svg></b><b class="tool corner"><svg><use href="#t-circ"/></svg></b>
                    <b class="tool corner"><svg><use href="#t-ell"/></svg></b><b class="tool corner"><svg><use href="#t-spl"/></svg></b>
                    <b class="tool corner"><svg><use href="#t-lead"/></svg></b><b class="tool corner"><svg><use href="#t-poly"/></svg></b>
                    <b class="tool corner"><svg><use href="#t-hatch"/></svg></b>
                </div>
                <div class="tool-grid">
                    <b class="tool"><span class="big-a">A</span></b><b class="tool corner"><svg><use href="#t-dim"/></svg></b>
                    <b class="tool"><svg><use href="#t-img"/></svg></b>
                </div>
                <div class="tool-grid">
                    <b class="tool corner"><svg><use href="#t-draft"/></svg></b><b class="tool"><svg><use href="#t-ruler"/></svg></b>
                    <b class="tool"><svg><use href="#t-over"/></svg></b><b class="tool corner"><svg><use href="#t-sel"/></svg></b>
                </div>
                <div class="tool-grid">
                    <b class="tool corner"><svg><use href="#t-cube"/></svg></b>
                </div>
            </div>

            <div class="q-center">
                <div class="q-tabs">
                    <div class="qtab qtab-1"><svg class="ic-v"><use href="#q-logo"/></svg><span>S...</span><i class="tab-x tab-x-off">✕</i></div>
                    <div class="qtab qtab-2"><svg class="ic-v"><use href="#q-logo"/></svg><span>simbol...</span><i class="tab-x tab-x-off">✕</i></div>
                    <div class="qtab qtab-on"><svg class="ic-v"><use href="#q-logo"/></svg><span>simbologia-...</span><i class="tab-x">✕</i></div>
                </div>
                <div class="q-view">
                    <svg class="ruler-corner"></svg>
                    <svg class="ruler-top" xmlns="http://www.w3.org/2000/svg">
                        <g transform="translate(-788 0)">
                            <text x="897" y="12" text-anchor="middle" class="r-txt">150</text>
                            <text x="1029" y="12" text-anchor="middle" class="r-txt">200</text>
                            <path d="M792.500 18v4M818.500 18v4M844.500 18v4M871.500 18v4M897.500 13v9M924.500 18v4M950.500 18v4M976.500 18v4M1003.500 18v4M1029.500 13v9M1056.500 18v4" stroke="#222"/>
                        </g>
                    </svg>
                    <div class="vs vs-view-spacer"></div>
                    <svg class="ruler-left" xmlns="http://www.w3.org/2000/svg">
                        <g transform="translate(-766 -122)">
                            <text transform="translate(778 160) rotate(-90)" text-anchor="middle" class="r-txt">50</text>
                            <text transform="translate(778 292) rotate(-90)" text-anchor="middle" class="r-txt">0</text>
                            <text transform="translate(778 423) rotate(-90)" text-anchor="middle" class="r-txt">-50</text>
                            <text transform="translate(778 556) rotate(-90)" text-anchor="middle" class="r-txt">-100</text>
                            <path d="M784 134.500h4M784 160.500h4M784 187.500h4M784 213.500h4M784 240.500h4M784 266.500h4M779 292.500h9M784 319.500h4M784 345.500h4M784 371.500h4M784 398.500h4M779 424.500h9M784 451.500h4M784 477.500h4M784 503.500h4M784 530.500h4M779 556.500h9M784 583.500h4" stroke="#222"/>
                        </g>
                    </svg>
                    <div class="cad">
                        <svg class="canvas-svg" xmlns="http://www.w3.org/2000/svg">
                            <defs>
                                <pattern id="dots" x="4.400" y="12.200" width="26.450" height="26.450" patternUnits="userSpaceOnUse"><rect width="1" height="1" fill="#8a8a8a"/></pattern>
                            </defs>
                            <rect width="100%" height="100%" fill="url(#dots)"/>
                            <g transform="translate(-788 -122)">
                                <path d="M788 292.500h289M1030.500 122v467" stroke="#4a4a4a"/>
                                <g fill="none" stroke="#fff">
                                    <path d="M792 279.500h77M802.500 266v22M797 288.500h10l-5 5z"/>
                                    <circle cx="933" cy="292" r="15.500"/>
                                    <path d="M918 291.500h30"/>
                                    <circle cx="1006.500" cy="249.500" r="9.500"/>
                                    <circle cx="1006.500" cy="279.500" r="9.500"/>
                                    <circle cx="1005.500" cy="310" r="9.500"/>
                                    <path d="M1016 249.500h44M1016 279.500h38"/>
                                    <circle cx="813" cy="374.500" r="15.500"/>
                                    <path d="M829 374.500h207"/>
                                </g>
                                <circle cx="1027.500" cy="279.500" r="5" fill="none" stroke="#a82828"/>
                                <path d="M1022 279.500h11M1027.500 274v11" stroke="#a82828"/>
                                <g class="cad-t">
                                    <text x="803" y="277" textLength="59" class="c9" lengthAdjust="spacing">+ XX,XX (X,X)</text>
                                    <text x="933" y="288" text-anchor="middle" class="c9">XX</text>
                                    <text x="932" y="302" text-anchor="middle" class="c8">xx</text>
                                    <text x="1004" y="253" class="c8" text-anchor="middle">X</text>
                                    <text x="1004" y="283" class="c8" text-anchor="middle">X</text>
                                    <text x="1004" y="314" class="c8" text-anchor="middle">X</text>
                                    <path d="M1008 248h2v4h-2zM1008 278h2v4h-2zM1007 308h2v4h-2z" fill="#fff"/>
                                    <text x="1017" y="248" textLength="33" class="c8" lengthAdjust="spacing">X,X X X,X</text>
                                    <text x="1034" y="258" text-anchor="middle" class="c8">X,X</text>
                                    <text x="1015" y="278" textLength="33" class="c8" lengthAdjust="spacing">X,X X X,X</text>
                                    <text x="813" y="380" text-anchor="middle" class="c-x">X</text>
                                    <text x="837" y="372" textLength="193" class="c-title" lengthAdjust="spacingAndGlyphs">TITULO DO DESENHO</text>
                                    <text x="836" y="388" textLength="44" class="c-esc" lengthAdjust="spacing">ESCALA</text>
                                </g>
                            </g>
                        </svg>
                    </div>
                    <div class="vs vs-view"><svg class="ch"><use href="#chev-u"/></svg><div class="thumb thumb-view"></div><svg class="ch"><use href="#chev-d"/></svg></div>
                    <div></div>
                    <div class="view-bottom">
                        <div class="hs hs-view"><svg class="ch"><use href="#chev-l"/></svg><div class="hthumb hthumb-view"></div><svg class="ch ch-end"><use href="#chev-r"/></svg></div>
                        <div class="scale-lbl">10 &lt; 100</div>
                    </div>
                </div>
                <div class="console">
                    <div class="con-text">
                        <p class="red">Entidades e camadas negras são salvas como brancas.</p>
                        <p class="red">As cores personalizadas são aproximadas para a cor fixa mais<br>próxima.</p>
                        <p>Arquivo salvo: C:/Users/joao torres/OneDrive - SOCIEDADE<br>DE ENSINO SUPERIOR ESTACIO DE SA/Arduino/portfolio</p>
                    </div>
                    <div class="vs vs-con"><svg class="ch"><use href="#chev-u"/></svg><div class="thumb thumb-con"></div><svg class="ch"><use href="#chev-d"/></svg></div>
                </div>
                <div class="cmd">
                    <span>Comando:</span>
                    <div class="cmd-input"></div>
                    <b class="cmd-btn"><svg class="ic-s"><use href="#win"/></svg></b>
                </div>
            </div>

            <div class="q-docks">
                <div class="dock-title q-dock-title"><span>Lista de camadas</span><svg class="dk-i"><use href="#restore"/></svg><svg class="dk-i"><use href="#close-x"/></svg></div>
                <div class="layer-btns">
                    <b class="lb"><svg class="lb-eye"><use href="#eye"/></svg></b>
                    <b class="lb lb-off"><svg class="lb-eye"><use href="#eye"/></svg></b>
                    <b class="lb lb-red"><svg class="lb-s"><path d="M0 5h12v3H0zM4.500 0h3v13h-3z" fill="#e00000"/></svg></b>
                    <b class="lb lb-red"><svg class="lb-s"><path d="M0 5h12v3H0z" fill="#e00000"/></svg></b>
                    <b class="lb"><svg class="lb-p"><use href="#pencil-y"/></svg></b>
                </div>
                <div class="layer-box">
                    <div class="layers">
                        <div class="lr lr-sel"><svg class="eye"><use href="#eye"/></svg><svg class="lk"><use href="#lock"/></svg><span>0</span></div>
                        <div class="lr"><svg class="eye"><use href="#eye"/></svg><svg class="lk"><use href="#lock"/></svg><span>Circle</span></div>
                        <div class="lr"><svg class="eye"><use href="#eye"/></svg><svg class="lk"><use href="#lock"/></svg><span>Circle001</span></div>
                        <div class="lr"><svg class="eye"><use href="#eye"/></svg><svg class="lk"><use href="#lock"/></svg><span>Circle002</span></div>
                        <div class="lr"><svg class="eye"><use href="#eye"/></svg><svg class="lk"><use href="#lock"/></svg><span>Circle003</span></div>
                        <div class="lr"><svg class="eye"><use href="#eye"/></svg><svg class="lk"><use href="#lock"/></svg><span>Circle004</span></div>
                        <div class="lr"><svg class="eye"><use href="#eye"/></svg><svg class="lk"><use href="#lock"/></svg><span>Circle005</span></div>
                        <div class="lr"><svg class="eye"><use href="#eye"/></svg><svg class="lk"><use href="#lock"/></svg><span>Circle006</span></div>
                        <div class="lr"><svg class="eye"><use href="#eye"/></svg><svg class="lk"><use href="#lock"/></svg><span>Line</span></div>
                        <div class="lr"><svg class="eye"><use href="#eye"/></svg><svg class="lk"><use href="#lock"/></svg><span>Line001</span></div>
                        <div class="lr"><svg class="eye"><use href="#eye"/></svg><svg class="lk"><use href="#lock"/></svg><span>Line003</span></div>
                        <div class="lr"><svg class="eye"><use href="#eye"/></svg><svg class="lk"><use href="#lock"/></svg><span>Line004</span></div>
                        <div class="lr"><svg class="eye"><use href="#eye"/></svg><svg class="lk"><use href="#lock"/></svg><span>Line005</span></div>
                        <div class="lr"><svg class="eye"><use href="#eye"/></svg><svg class="lk"><use href="#lock"/></svg><span>Line006</span></div>
                        <div class="lr"><svg class="eye"><use href="#eye"/></svg><svg class="lk"><use href="#lock"/></svg><span>Line007</span></div>
                        <div class="lr"><svg class="eye"><use href="#eye"/></svg><svg class="lk"><use href="#lock"/></svg><span>Line009</span></div>
                    </div>
                    <div class="vs vs-layers"><svg class="ch"><use href="#chev-u"/></svg><div class="thumb thumb-layers"></div><svg class="ch"><use href="#chev-d"/></svg></div>
                </div>
                <div class="dock-title q-dock-title2"><span>Editor de propriedade</span><svg class="dk-i"><use href="#restore"/></svg><svg class="dk-i"><use href="#close-x"/></svg></div>
                <div class="editor-box">
                    <div class="editor">
                        <div class="sel-row">
                            <span>Seleção:</span>
                            <div class="combo sel-combo"><span>Sem seleção</span><svg class="chev"><use href="#chev-d"/></svg></div>
                        </div>
                        <fieldset class="group">
                            <legend>Propriedades gerais</legend>
                            <div class="form">
                                <label>Camada:</label><div class="fld fld-c"><svg class="chev"><use href="#chev-d"/></svg></div>
                                <label>Cor:</label><div class="fld fld-c"><i class="cor-sw"></i><span>Pela</span><svg class="chev"><use href="#chev-d"/></svg></div>
                                <label>Largura da Linha:</label><div class="fld fld-c"><i class="lw-line"></i><span>Pela</span><svg class="chev"><use href="#chev-d"/></svg></div>
                                <label>Tipo de Linha:</label><div class="fld fld-c"><span>Pela Cai</span><svg class="chev"><use href="#chev-d"/></svg></div>
                                <label>Escala do tipo de linha:</label><div class="fld"></div>
                                <label>Ordem do Desenho:</label><div class="fld"></div>
                                <label>Manipulador:</label><div class="fld"></div>
                            </div>
                        </fieldset>
                    </div>
                    <div class="vs vs-editor"><svg class="ch"><use href="#chev-u"/></svg><div class="thumb"></div><svg class="ch"><use href="#chev-d"/></svg></div>
                </div>
            </div>

            <div class="q-far">
                <div class="hgrip hgrip-far"></div>
                <svg class="far-i"><use href="#dk1"/></svg>
                <svg class="far-i far-light"><use href="#dk2"/></svg>
                <i class="far-sep"></i>
                <svg class="far-i"><use href="#dk3"/></svg>
                <svg class="far-i far-light"><use href="#dk4"/></svg>
                <i class="far-sep"></i>
                <svg class="far-i"><use href="#dk5"/></svg>
            </div>
        </div>

        <div class="q-status">
            <div class="coord coord-a"><span>200.8858,-111.2970</span><span>@2.0041,-116.0832</span></div>
            <div class="coord coord-b"><span>229 6565&lt;331°</span><span>@1: 6.1005&lt;271</span></div>
            <div class="prompt">Selecione a<br>entidade ou região</div>
            <svg class="mouse"><use href="#mouse"/></svg>
            <div class="sel-msg">Nenhuma entidade foi<br>selecionada.</div>
            <div class="q-end"></div>
        </div>
    </div>
</div>
</body>
</html>
```
FILE: styles.css
```css
* {
    box-sizing: border-box;
    margin: 0;
    padding: 0;
}
html, body {
    width: 1361px;
    height: 731px;
    overflow: hidden;
    background: #f0f0f0;
    font-family: "Noto Sans", "Open Sans", sans-serif;
    font-size: 11.5px;
    color: #111;
}
.defs {
    position: absolute;
    width: 0;
    height: 0;
}
.desktop {
    display: flex;
    width: 1361px;
    height: 731px;
}
b, i, em {
    font-weight: normal;
    font-style: normal;
}

/* shared bits */
.titlebar {
    display: flex;
    align-items: center;
    background: #fff;
    flex: none;
}
.winbtns {
    margin-left: auto;
    display: flex;
    gap: 35px;
}
.wb {
    width: 10px;
    height: 14px;
}
.menubar {
    display: flex;
    align-items: center;
    background: #fff;
    flex: none;
    white-space: nowrap;
}
.tight {
    letter-spacing: -.36px;
}
.tight2 {
    letter-spacing: -.1px;
}
.more {
    color: #777;
    font-size: 12px;
    margin-left: auto;
    line-height: 1;
}
.grip {
    flex: none;
    width: 5px;
    height: 26px;
    margin: 0 3px;
    background: radial-gradient(circle, #aaa 1px, transparent 1.2px) 0 0 / 4px 4px;
}
.sep {
    flex: none;
    width: 5px;
    height: 26px;
    background: linear-gradient(#d4d4d4, #d4d4d4) center / 1px 100% no-repeat;
}
.btn {
    flex: none;
    width: 31px;
    height: 30px;
    display: flex;
    align-items: center;
    justify-content: center;
}
.btn-29 {
    width: 29px;
}
.btn-gap {
    margin-left: 6px;
}
.on, .on-group {
    background: #bcdcf4;
    box-shadow: inset 0 0 0 1px #90c4ec;
}
.on-group {
    display: flex;
    align-items: center;
    height: 30px;
    width: 42px;
    flex: none;
    margin-left: 1px;
}
.ic {
    width: 24px;
    height: 24px;
}
.ic-s {
    width: 18px;
    height: 18px;
    flex: none;
}
.ic-n {
    width: 16px;
    height: 16px;
    flex: none;
}
.ic-w {
    width: 13px;
    height: 13px;
    flex: none;
}
.ic-v {
    width: 16px;
    height: 16px;
    flex: none;
}
.help-q {
    font-family: "Liberation Sans", sans-serif;
    font-size: 14px;
    font-weight: 700;
    fill: #4a78c0;
}
.icon-a {
    font-family: "Liberation Serif", serif;
    font-size: 23px;
    font-weight: 700;
    font-style: italic;
    fill: #f0d840;
    stroke: #6a6010;
    stroke-width: .7px;
}
.dd {
    flex: none;
    width: 13px;
    display: flex;
    justify-content: center;
}
.dd::before {
    content: "";
    border-left: 3.500px solid transparent;
    border-right: 3.500px solid transparent;
    border-top: 4px solid #222;
}
.chev {
    width: 12px;
    height: 12px;
    margin-left: auto;
    flex: none;
}
.ch {
    width: 12px;
    height: 12px;
    flex: none;
}
.tri {
    width: 0;
    height: 0;
    border: 4px solid transparent;
    border-top: 5px solid #111;
    border-bottom: 0;
    flex: none;
}

/* scrollbars */
.vs {
    flex: none;
    width: 16px;
    background: #f0f0f0;
    display: flex;
    flex-direction: column;
    align-items: center;
    padding: 3px 0;
}
.thumb {
    width: 16px;
    flex: 1;
    background: #cdcdcd;
    margin: 3px 0;
}
.hs {
    display: flex;
    align-items: center;
    background: #f0f0f0;
    padding: 0 3px;
}
.hthumb {
    height: 100%;
    background: #cdcdcd;
}
.ch-end {
    margin-left: auto;
}

/* freecad */
.freecad {
    width: 682px;
    flex: none;
    height: 731px;
    display: flex;
    flex-direction: column;
    overflow: hidden;
}
.fc-title {
    height: 30px;
    font-size: 11.500px;
    padding-left: 8px;
    padding-right: 19px;
}
.logo {
    width: 18px;
    height: 18px;
    margin-right: 3px;
}
.fc-menu {
    height: 21px;
    padding-left: 8px;
    gap: 15px;
}
.menu-more {
    margin-right: 4px;
}
.tbrow {
    display: flex;
    height: 34px;
    flex: none;
    border-bottom: 1px solid #fff;
    box-shadow: inset 0 -1px 0 #d8d8d8;
}
.bar {
    display: flex;
    align-items: center;
    flex: none;
    border-right: 1px solid #dcdcdc;
    padding-right: 1px;
}
.bar-449 { width: 449px; }
.bar-161 { width: 161px; }
.bar-515 { width: 515px; }
.bar-278 { width: 278px; }
.bar-292 { width: 292px; }
.bar-55 { width: 55px; }
.bar-last { flex: 1; padding-right: 3px; border-right: 0; }
.combo {
    display: flex;
    align-items: center;
    background: #e1e1e1;
    border: 1px solid #adadad;
}
.draft-combo {
    width: 148px;
    height: 23px;
    gap: 1px;
    padding: 0 5px 0 4px;
    font-size: 12px;
}
.tb-text {
    height: 22px;
    display: flex;
    align-items: center;
    flex: none;
    background: #e6e6e6;
    border: 1px solid #adadad;
    gap: 2px;
    white-space: nowrap;
    font-size: 11px;
    letter-spacing: -.3px;
}
.auto-btn {
    width: 73px;
    justify-content: center;
}
.width-btn {
    width: 87px;
    margin-left: 2px;
    padding-left: 4px;
    gap: 4px;
}
.tb-plain {
    display: flex;
    align-items: center;
    gap: 1px;
    flex: none;
    margin-left: 8px;
    font-size: 11px;
    letter-spacing: -.3px;
}

/* freecad main area */
.fc-main {
    flex: 1;
    display: flex;
    min-height: 0;
}
.combo-view {
    width: 262px;
    flex: none;
    display: flex;
    flex-direction: column;
    padding-top: 2px;
    overflow: hidden;
}
.dock-title {
    display: flex;
    align-items: center;
    background: #d6d6d6;
    height: 18px;
    padding-left: 5px;
    flex: none;
    gap: 10px;
    border-bottom: 1px solid #bcbcbc;
}
.dock-title span {
    margin-right: auto;
}
.dk-i {
    width: 11px;
    height: 11px;
}
.combo-view .dock-title {
    width: 257px;
    padding-right: 5px;
}
.tabs-top {
    display: flex;
    height: 24px;
    padding: 4px 0 0 1px;
    flex: none;
    align-items: flex-end;
    width: 257px;
}
.tab {
    display: flex;
    align-items: center;
    justify-content: center;
    border: 1px solid #d9d9d9;
    border-bottom: 0;
    flex: none;
    padding-bottom: 2px;
    letter-spacing: -.2px;
}
.tab-active {
    background: #fff;
}
.tab-modelo {
    width: 58px;
    height: 20px;
}
.tab-tarefas {
    width: 57px;
    height: 18px;
    padding-bottom: 1px;
}
.tree-box {
    margin-left: 2px;
    width: 252px;
    height: 233px;
    border: 1px solid #acacac;
    flex: none;
    display: flex;
    flex-direction: column;
}
.tree-body {
    flex: 1;
    display: flex;
    background: #fff;
    min-height: 0;
}
.tree {
    flex: 1;
    overflow: hidden;
    min-width: 0;
}
.t-row {
    height: 20px;
    display: flex;
    align-items: center;
    white-space: nowrap;
}
.t-head {
    padding-left: 4px;
    margin-top: 1px;
}
.t-app {
    padding-left: 3px;
    height: 19px;
}
.t-doc {
    padding-left: 4px;
}
.t-doc strong {
    font-weight: 700;
    margin-left: 5px;
}
.t-item {
    padding-left: 23px;
}
.t-item span {
    margin-left: 6px;
}
.tw {
    width: 12px;
    height: 12px;
    margin-right: 9px;
    flex: none;
}
.tw-g {
    opacity: .55;
}
.fold {
    width: 15px;
    height: 15px;
    flex: none;
}
.vs-tree {
    height: 216px;
}
.hs-tree {
    height: 15px;
    flex: none;
}
.hthumb-tree {
    width: 128px;
    margin-left: 5px;
}
.prop-box {
    margin: 7px 0 0 3px;
    width: 247px;
    height: 241px;
    background: #fff;
    border: 1px solid #7d7d7d;
    flex: none;
}
.prop-head {
    display: flex;
    height: 22px;
    align-items: center;
}
.ph-a {
    width: 102px;
    padding-left: 5px;
    border-right: 1px solid #bdbdbd;
    height: 22px;
    line-height: 22px;
}
.ph-b {
    padding-left: 4px;
}
.tabs-bottom {
    display: flex;
    align-items: flex-start;
    padding: 1px 0 0 2px;
    width: 256px;
    height: 22px;
    border-bottom: 1px solid #dcdcdc;
}
.tab-ver {
    width: 42px;
    height: 20px;
    border: 1px solid #d9d9d9;
    border-top: 0;
    padding-bottom: 0;
}
.tab-dados {
    width: 50px;
    height: 18px;
    border: 0;
    background: #f0f0f0;
    border-bottom: 1px solid #d9d9d9;
    padding-bottom: 0;
}
.view-col {
    flex: 1;
    display: flex;
    flex-direction: column;
    min-width: 0;
}
.view3d {
    flex: 1;
    position: relative;
    background: linear-gradient(#35346a, #9395aa);
    min-height: 0;
}
.canvas-svg {
    position: absolute;
    inset: 0;
    width: 100%;
    height: 100%;
}
.t3d {
    font-family: "Liberation Sans", sans-serif;
    fill: #111;
}
.t-x { font-size: 21px; }
.t-xx { font-size: 11px; }
.t-title { font-size: 21px; }
.t-esc { font-size: 14px; }
.t-top {
    font-family: "Liberation Sans", sans-serif;
    font-weight: 700;
    font-size: 14px;
    fill: #111;
}
.t-ax {
    font-size: 11px;
    font-family: "Liberation Sans", sans-serif;
    fill: #111;
}
.view-tabs {
    height: 25px;
    flex: none;
    display: flex;
    align-items: flex-start;
    padding-left: 3px;
}
.vtab {
    display: flex;
    align-items: center;
    gap: 3px;
    padding-left: 9px;
    height: 22px;
    flex: none;
    font-size: 11px;
}
.vtab-home {
    width: 120px;
    border: 1px solid #d9d9d9;
    border-top: 0;
    letter-spacing: -.4px;
    gap: 2px;
}
.vtab-home .tab-x {
    margin-left: 2px;
}
.vtab-on {
    width: 162px;
    background: #fff;
    height: 23px;
    padding-left: 13px;
    letter-spacing: -.4px;
}
.tab-x {
    width: 14px;
    height: 14px;
    flex: none;
    margin-left: 3px;
    background: #e8624a;
    border: 1px solid #c84a34;
    color: #fff;
    font-size: 9px;
    font-weight: 700;
    line-height: 12px;
    text-align: center;
    border-radius: 2px;
    letter-spacing: 0;
}
.tab-x-off {
    background: #bdbdbd;
    border-color: #a8a8a8;
}
.fc-status {
    height: 26px;
    flex: none;
    display: flex;
    align-items: center;
}
.st-msg {
    width: 312px;
    flex: none;
    white-space: nowrap;
    overflow: hidden;
    padding: 3px 0 0 1px;
    font-size: 11px;
    letter-spacing: -.22px;
}
.st-cell {
    display: flex;
    align-items: center;
    height: 26px;
    flex: none;
    border-left: 1px solid #dcdcdc;
    padding-top: 3px;
}
.st-mesh { width: 50px; padding-left: 12px; padding-right: 5px; }
.st-gest { width: 90px; padding-left: 13px; gap: 2px; letter-spacing: -.3px; }
.st-scale { width: 85px; padding-left: 29px; gap: 20px; }
.st-dim { width: 126px; padding-left: 3px; letter-spacing: -.5px; }
.st-end { flex: 1; height: 26px; border-left: 1px solid #dcdcdc; }

/* qcad */
.qcad {
    flex: 1;
    height: 731px;
    display: flex;
    flex-direction: column;
    min-width: 0;
    border-left: 1px solid #6c7078;
    overflow: hidden;
}
.q-title {
    height: 22px;
    padding: 0 0 8px 8px;
    color: #8a8a8a;
    font-size: 11.800px;
}
.logo-q {
    width: 15px;
    height: 15px;
    margin-right: 5px;
}
.winbtns-q {
    gap: 30px;
    padding-right: 14px;
}
.q-menu {
    height: 21px;
    padding-left: 7px;
    gap: 15px;
    color: #8a8a8a;
}
.q-tools {
    height: 33px;
    flex: none;
    display: flex;
    align-items: center;
    border-top: 1px solid #e4e4e4;
    border-bottom: 1px solid #fff;
}
.q-tools .grip-q {
    margin: 0 0 0 3px;
    height: 24px;
}
.qb {
    flex: none;
    width: 29px;
    height: 28px;
    display: flex;
    align-items: center;
    justify-content: center;
}
.qb-pressed {
    background: linear-gradient(#7a7a7a, #b4b4b4);
    border: 1px solid #777;
    margin-left: 2px;
}
.qb-round {
    flex: none;
    width: 36px;
    height: 25px;
    margin-left: 4px;
    border: 2px solid #999;
    border-radius: 5px;
    background: #f4f4f4;
    display: flex;
    align-items: center;
    justify-content: center;
}
.vline {
    flex: none;
    width: 1px;
    height: 30px;
    background: #c8c8c8;
    margin-left: 3px;
}
.vl-735 { margin-left: 13px; }
.vl-799 { margin-left: 9px; }
.vl-921 { margin-left: 1px; }
.vl-1121 { margin-left: 4px; }
.thin {
    flex: none;
    width: 1px;
    height: 24px;
    background: #d4d4d4;
    margin: 0 2px;
}
.qb-open { margin-left: 2px; }
.qb-undo { margin-left: 2px; }
.qb-cut { margin-left: 5px; }
.qb-pen { margin-left: 2px; }
.qb-grid {
    background: #e0e0e0;
    box-shadow: inset 0 0 0 1px #8c8c8c;
}
.q-more { margin-left: 12px; flex: none; }
.q-more2 { margin-left: 6px; flex: none; }

.q-main {
    flex: 1;
    display: flex;
    min-height: 0;
}
.q-side {
    width: 82px;
    flex: none;
    padding: 2px 0 0 1px;
    display: flex;
    flex-direction: column;
    gap: 8px;
}
.hgrip {
    height: 4px;
    margin: 1px 2px -2px 2px;
    background: radial-gradient(circle, #aaa 1px, transparent 1.2px) 0 0 / 4px 4px;
    flex: none;
}
.tool-grid {
    display: grid;
    grid-template-columns: 40px 40px;
    grid-auto-rows: 40px;
    flex: none;
}
.tool {
    border: 1px solid #a0a0a0;
    background: linear-gradient(#d9d9d9, #f6f6f6 45%);
    position: relative;
    display: flex;
    align-items: center;
    justify-content: center;
}
.tool svg {
    width: 34px;
    height: 34px;
}
.corner::after {
    content: "";
    position: absolute;
    right: 2px;
    bottom: 2px;
    border: 3px solid transparent;
    border-right: 3px solid #111;
    border-bottom: 3px solid #111;
}
.big-a {
    font-family: "Liberation Serif", serif;
    font-size: 32px;
    line-height: 1;
    color: #000;
}
.q-center {
    width: 330px;
    flex: none;
    display: flex;
    flex-direction: column;
    border-left: 1px solid #a8a8a8;
    border-bottom: 1px solid #a8a8a8;
}
.q-tabs {
    height: 24px;
    flex: none;
    display: flex;
    align-items: flex-end;
    padding-left: 1px;
    font-size: 11px;
    letter-spacing: -.45px;
}
.q-tabs .tab-x {
    margin-left: 0;
}
.qtab {
    height: 22px;
    display: flex;
    align-items: center;
    flex: none;
    border-top: 1px solid #d8d8d8;
    border-right: 1px solid #d8d8d8;
    border-bottom: 1px solid #a8a8a8;
    padding-left: 11px;
    gap: 7px;
}
.qtab-1 { width: 83px; }
.qtab-2 { width: 110px; padding-left: 13px; }
.qtab-on {
    width: 135px;
    height: 24px;
    background: #fff;
    border: 0;
    padding-left: 13px;
}
.q-view {
    display: grid;
    grid-template-columns: 22px 290px 17px;
    grid-template-rows: 22px 467px 18px;
    flex: none;
}
.ruler-corner, .ruler-top, .ruler-left {
    width: 100%;
    height: 100%;
    display: block;
}
.r-txt {
    font-family: "Noto Sans", sans-serif;
    font-size: 11.500px;
    fill: #111;
}
.cad {
    position: relative;
    background: #000;
}
.vs-view-spacer {
    background: #fff;
    padding: 0;
}
.vs-view {
    width: 17px;
}
.thumb-view {
    flex: none;
    height: 107px;
    margin-top: 172px;
    margin-bottom: auto;
    width: 17px;
}
.view-bottom {
    grid-column: 2 / 4;
    display: flex;
    align-items: center;
}
.hs-view {
    width: 242px;
    height: 18px;
    flex: none;
    padding: 0 2px;
}
.hthumb-view {
    width: 27px;
    margin-left: 109px;
}
.scale-lbl {
    margin-left: auto;
    padding-right: 1px;
    white-space: nowrap;
    font-size: 11px;
    letter-spacing: -.2px;
}
.console {
    margin-top: 3px;
    height: 55px;
    background: #fff;
    display: flex;
    flex: none;
    border-bottom: 1px solid #a8a8a8;
}
.con-text {
    flex: 1;
    overflow: hidden;
    padding: 0 5px 0 3px;
    line-height: 13px;
    font-size: 11px;
    letter-spacing: -.3px;
    white-space: nowrap;
}
.red {
    color: #e0001c;
}
.thumb-con {
    flex: none;
    height: 18px;
    margin: 4px 0 auto;
}
.cmd {
    flex: 1;
    display: flex;
    align-items: flex-end;
    padding: 0 1px 1px 0;
}
.cmd span {
    line-height: 18px;
    font-size: 11px;
    letter-spacing: -.1px;
}
.cmd-input {
    background: #fff;
    width: 251px;
    height: 18px;
    margin-left: 4px;
}
.cmd-btn {
    width: 21px;
    height: 21px;
    margin-left: 1px;
    background: #e4e4e4;
    border: 1px solid #aaa;
    display: flex;
    align-items: center;
    justify-content: center;
}
.q-docks {
    width: 234px;
    flex: none;
    margin-left: 3px;
    padding-top: 2px;
    display: flex;
    flex-direction: column;
}
.q-dock-title, .q-dock-title2 {
    padding-right: 6px;
    height: 19px;
    letter-spacing: -.2px;
}
.q-dock-title2 {
    margin-top: 7px;
}
.layer-btns {
    display: flex;
    gap: 2px;
    height: 20px;
    margin: 2px 0 2px 1px;
    flex: none;
}
.lb {
    width: 44.500px;
    flex: none;
    display: flex;
    align-items: center;
    justify-content: center;
    border: 1px solid #adadad;
    background: #ececec;
    color: #000;
}
.lb-off { color: #999; }
.lb-eye { width: 18px; height: 13px; }
.lb-s { width: 12px; height: 13px; }
.lb-p { width: 17px; height: 17px; }
.layer-box {
    height: 320px;
    flex: none;
    display: flex;
    border: 1px solid #7d7d7d;
    background: #fff;
}
.layers {
    flex: 1;
    overflow: hidden;
    padding-left: 1px;
}
.lr {
    height: 20px;
    display: flex;
    align-items: center;
    color: #000;
    letter-spacing: -.2px;
}
.lr span {
    margin: -2px 0 0 8px;
}
.lr-sel {
    background: #d6d6d6;
}
.eye {
    width: 16px;
    height: 11px;
    margin-left: 3px;
    flex: none;
}
.lk {
    width: 10px;
    height: 13px;
    margin-left: 4px;
    flex: none;
    color: #a4a4a4;
}
.lr-sel .eye { color: #12385c; }
.lr-sel .lk { color: #6a90bc; }
.vs-layers .thumb {
    flex: none;
    height: 118px;
    margin: 5px 0 auto;
}
.editor-box {
    height: 223px;
    margin-top: 1px;
    flex: none;
    display: flex;
    border: 1px solid #7d7d7d;
    font-size: 11px;
    letter-spacing: -.4px;
}
.editor {
    flex: 1;
    padding: 6px 10px 0 9px;
    min-width: 0;
}
.sel-row {
    display: flex;
    align-items: center;
    gap: 7px;
}
.sel-combo {
    width: 150px;
    height: 20px;
    padding: 0 6px 0 3px;
}
.group {
    border: 1px solid #dcdcdc;
    margin-top: 6px;
    height: 174px;
    padding: 0 9px 0 0;
    min-width: 0;
}
.group legend {
    margin-left: 6px;
    padding: 0 2px;
    line-height: 14px;
}
.form {
    display: grid;
    grid-template-columns: 1fr 61px;
    column-gap: 7px;
    row-gap: 1px;
    grid-auto-rows: 21px;
    color: #888;
    margin-top: 5px;
}
.form label {
    text-align: right;
    line-height: 21px;
    white-space: nowrap;
}
.fld {
    display: flex;
    align-items: center;
    border: 1px solid #d0d0d0;
    padding: 0 3px;
    gap: 2px;
    overflow: hidden;
    white-space: nowrap;
}
.fld-c {
    background: #cccccc;
    border-color: #c4c4c4;
    color: #777;
}
.fld .chev {
    opacity: .45;
}
.cor-sw {
    width: 16px;
    height: 11px;
    background: #fff;
    border: 1px solid #555;
    flex: none;
}
.lw-line {
    width: 16px;
    height: 1px;
    background: #666;
    flex: none;
}
.vs-editor .thumb {
    margin: 5px 0 3px;
}
.q-far {
    flex: 1;
    padding: 3px 0 0 2px;
    display: flex;
    flex-direction: column;
    gap: 3px;
    min-width: 0;
}
.hgrip-far {
    margin: 1px 0 1px;
}
.far-i {
    width: 27px;
    height: 29px;
    flex: none;
    background: #e0e0e0;
    border: 1px solid #999;
    padding: 2px;
}
.far-light {
    background: #f0f0f0;
    border-color: #ddd;
}
.far-sep {
    height: 1px;
    background: #c8c8c8;
    margin: 1px 2px;
    flex: none;
}
.q-status {
    height: 39px;
    flex: none;
    display: flex;
    overflow: hidden;
    font-size: 12px;
}
.coord {
    display: flex;
    flex-direction: column;
    gap: 6px;
    padding-top: 5px;
    line-height: 15px;
    white-space: nowrap;
    flex: none;
}
.coord-a {
    width: 150px;
    padding-left: 1px;
}
.coord-b {
    width: 90px;
    padding-left: 4px;
    border-left: 1px solid #a8a8a8;
    margin-top: 3px;
    padding-top: 2px;
}
.prompt {
    width: 127px;
    margin-left: -83px;
    text-align: right;
    flex: none;
    line-height: 15px;
    padding-top: 9px;
    white-space: nowrap;
}
.mouse {
    width: 19px;
    height: 31px;
    margin: 6px 0 0 14px;
    flex: none;
}
.sel-msg {
    margin-left: 42px;
    line-height: 15px;
    padding-top: 9px;
    white-space: nowrap;
}
.q-end {
    margin-left: auto;
    width: 14px;
    border-left: 1px solid #dcdcdc;
}

/* text inside the qcad drawing */
.cad-t text {
    font-family: "Liberation Sans", sans-serif;
    fill: #ddd;
}
.c9 { font-size: 10px; }
.c8 { font-size: 9px; }
.cad-t .c-x { font-size: 15px; fill: #ccc; }
.cad-t .c-title { font-size: 18px; fill: #fff; }
.cad-t .c-esc { font-size: 10.500px; fill: #fff; }
```
